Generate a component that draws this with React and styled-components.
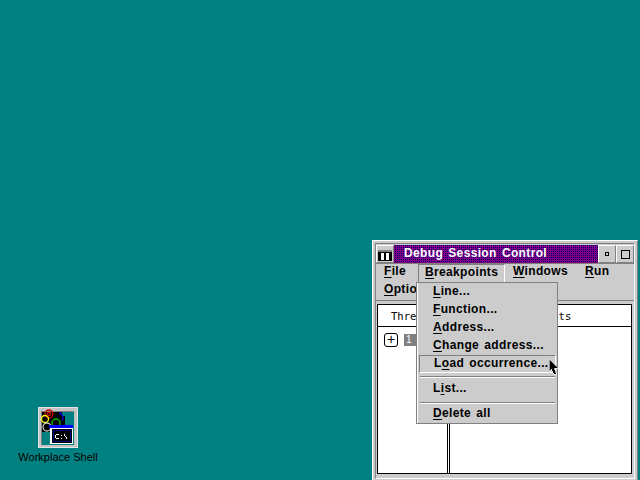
import React from 'react';
import styled, { createGlobalStyle } from 'styled-components';

const GlobalStyle = createGlobalStyle`
    html, body {
        margin: 0;
        padding: 0;
        background: #008080;
    }
`;

const Desktop = styled.div`
    position: relative;
    width: 640px;
    height: 480px;
    overflow: hidden;
    background: #008080;
    font-family: "Liberation Sans", Arial, sans-serif;
`;

const DesktopIcon = styled.div`
    position: absolute;
    left: 8px;
    top: 407px;
    width: 100px;
    display: flex;
    flex-direction: column;
    align-items: center;
    gap: 2px;
`;

const IconFrame = styled.div`
    width: 40px;
    height: 41px;
`;

const IconLabel = styled.div`
    font-size: 11px;
    line-height: 14px;
    color: #000;
    white-space: nowrap;
`;

const Win = styled.div`
    position: absolute;
    left: 372px;
    top: 240px;
    width: 266px;
    height: 242px;
    box-sizing: border-box;
    background: #cccccc;
    border-top: 1px solid #ffffff;
    border-left: 1px solid #ffffff;
    border-right: 1px solid #808080;
    border-bottom: 1px solid #808080;
    padding: 2px;
    display: flex;
`;

const WinInner = styled.div`
    flex: 1;
    min-width: 0;
    border-top: 1px solid #808080;
    border-left: 1px solid #808080;
    border-right: 1px solid #ffffff;
    border-bottom: 1px solid #ffffff;
    padding: 1px 0 4px 0;
    display: flex;
    flex-direction: column;
`;

const TitleRow = styled.div`
    display: flex;
    height: 18px;
    flex-shrink: 0;
`;

const SysButton = styled.div`
    width: 18px;
    height: 18px;
    box-sizing: border-box;
    background: #cccccc;
    border-top: 1px solid #fff;
    border-left: 1px solid #fff;
    border-right: 1px solid #808080;
    border-bottom: 1px solid #808080;
    display: flex;
    align-items: flex-end;
    justify-content: center;
    padding-bottom: 1px;
`;

const SysGlyph = styled.div`
    width: 14px;
    height: 11px;
    background: #000;
    border-top: 2px solid #808080;
    box-sizing: border-box;
    display: flex;
    justify-content: space-evenly;
`;

const SysPane = styled.div`
    width: 3px;
    height: 7px;
    margin-top: 1px;
    background: #fff;
`;

const TitleBar = styled.div`
    flex: 1;
    background-color: #800080;
    background-image: conic-gradient(#000080 0 90deg, #800080 0);
    background-size: 2px 2px;
    color: #fff;
    font-size: 12px;
    font-weight: 700;
    letter-spacing: 0.35px;
    word-spacing: 1.5px;
    line-height: 17px;
    padding-left: 10px;
    white-space: nowrap;
`;

const FrameButton = styled.div`
    width: 18px;
    height: 18px;
    box-sizing: border-box;
    background: #cccccc;
    border-top: 1px solid #fff;
    border-left: 1px solid #fff;
    border-right: 1px solid #808080;
    border-bottom: 1px solid #808080;
    display: flex;
    align-items: center;
    justify-content: center;
`;

const FrameGlyph = styled.div`
    width: ${(props) => props.size}px;
    height: ${(props) => props.size}px;
    box-sizing: border-box;
    border: 1px solid #000;
`;

const MenuBar = styled.div`
    display: grid;
    grid-template-columns: 42px 87px 72px 1fr;
    grid-auto-rows: 18px;
    height: 36px;
    flex-shrink: 0;
    border-top: 1px solid #808080;
    border-bottom: 1px solid #808080;
`;

const MenuItem = styled.div`
    font-size: 12px;
    font-weight: 700;
    letter-spacing: 0.35px;
    line-height: 15px;
    color: #000;
    padding-left: ${(props) => (props.active ? '6px' : '8px')};
    white-space: nowrap;
    box-sizing: border-box;
    ${(props) =>
        props.active &&
        `border-top: 1px solid #808080;
         border-left: 1px solid #808080;
         border-right: 1px solid #fff;`}

    u {
        text-underline-offset: 2px;
        text-decoration-thickness: 1px;
    }
`;

const Client = styled.div`
    flex: 1;
    margin: 3px 2px 0 1px;
    background: #fff;
    border: 1px solid #000;
    display: flex;
    flex-direction: column;
`;

const HeaderRow = styled.div`
    display: grid;
    grid-template-columns: 70px 1fr;
    height: 21px;
    border-bottom: 1px solid #000;
    flex-shrink: 0;
`;

const HeaderCell = styled.div`
    font-family: "DejaVu Sans Mono", "Liberation Mono", monospace;
    font-size: 10.5px;
    line-height: 22px;
    color: #000;
    white-space: nowrap;
    padding-left: ${(props) => props.pad}px;
`;

const Panes = styled.div`
    flex: 1;
    display: grid;
    grid-template-columns: 70px 1fr;
`;

const LeftPane = styled.div`
    border-right: 1px solid #000;
    padding: 6px 0 0 6px;
    display: flex;
    align-items: flex-start;
    gap: 6px;
`;

const PlusBox = styled.div`
    width: 14px;
    height: 14px;
    box-sizing: border-box;
    border: 1px solid #000;
    border-radius: 3px;
    font-size: 14px;
    line-height: 11px;
    text-align: center;
`;

const TreeLabel = styled.div`
    width: 20px;
    height: 12px;
    margin-top: 1px;
    background: #808080;
    color: #fff;
    font-size: 10px;
    line-height: 12px;
    padding-left: 2px;
    box-sizing: border-box;
`;

const RightPane = styled.div`
    border-left: 1px solid #000;
    margin-left: 1px;
`;

const Menu = styled.div`
    position: absolute;
    left: 416px;
    top: 282px;
    width: 142px;
    height: 142px;
    box-sizing: border-box;
    background: #cccccc;
    border: 1px solid #808080;
    box-shadow: inset 1px 0 0 #fff;
    padding: 0 1px 0 2px;
    display: flex;
    flex-direction: column;
`;

const Entry = styled.div`
    height: 18px;
    flex-shrink: 0;
    box-sizing: border-box;
    font-size: 12px;
    font-weight: 700;
    letter-spacing: 0.35px;
    word-spacing: 1.5px;
    line-height: ${(props) => (props.selected ? '15px' : '16px')};
    color: #000;
    padding-left: 14px;
    white-space: nowrap;
    ${(props) =>
        props.selected &&
        `border-top: 1px solid #808080;
         border-left: 1px solid #808080;
         border-right: 1px solid #fff;
         border-bottom: 1px solid #fff;`}

    u {
        text-underline-offset: 2px;
        text-decoration-thickness: 1px;
    }
`;

const Separator = styled.div`
    height: 1px;
    flex-shrink: 0;
    background: #808080;
    border-bottom: 1px solid #fff;
    margin: ${(props) => props.space};
`;

const Cursor = styled.svg`
    position: absolute;
    left: 548px;
    top: 358px;
`;

const WorkplaceIcon = () => (
    <svg width="40" height="41" viewBox="0 0 40 41" shapeRendering="crispEdges">
        <rect x="0" y="0" width="40" height="41" fill="#e4e4e4" />
        <rect x="1" y="1" width="38" height="39" fill="#c4c4c4" />
        <rect x="3" y="4" width="33" height="34" fill="#808080" />
        <rect x="4" y="5" width="32" height="33" fill="#008080" />
        <rect x="4" y="5" width="20" height="20" fill="#000" />
        <rect x="24" y="9" width="3" height="9" fill="#000" />
        <g fill="none" shapeRendering="auto" strokeWidth="1.3">
            <circle cx="11" cy="7" r="4" stroke="#d00000" />
            <circle cx="11" cy="7" r="1.5" stroke="#d00000" />
            <circle cx="7" cy="12" r="3.5" stroke="#ffff00" />
            <circle cx="9" cy="20" r="4" stroke="#c8c8c8" />
            <circle cx="18" cy="16" r="4" stroke="#00c000" />
            <path d="M21 6 A5 5 0 0 1 24 14" stroke="#0000e0" />
        </g>
        <rect x="11" y="18" width="24" height="3" fill="#0000ff" />
        <rect x="12" y="21" width="23" height="16" fill="#fff" />
        <rect x="14" y="22" width="20" height="14" fill="#000" />
        <rect x="15" y="23" width="18" height="12" fill="#000080" />
        <rect x="16" y="24" width="16" height="10" fill="#000" />
        <g fill="#fff">
            <rect x="18" y="27" width="3" height="1" />
            <rect x="17" y="28" width="1" height="3" />
            <rect x="18" y="31" width="3" height="1" />
            <rect x="23" y="28" width="1" height="1" />
            <rect x="23" y="31" width="1" height="1" />
            <rect x="26" y="27" width="1" height="2" />
            <rect x="27" y="29" width="1" height="1" />
            <rect x="28" y="30" width="1" height="2" />
        </g>
    </svg>
);

const App = () => {
    return (
        <Desktop>
            <GlobalStyle />
            <DesktopIcon>
                <IconFrame><WorkplaceIcon /></IconFrame>
                <IconLabel>Workplace Shell</IconLabel>
            </DesktopIcon>
            <Win>
                <WinInner>
                    <TitleRow>
                        <SysButton><SysGlyph><SysPane /><SysPane /></SysGlyph></SysButton>
                        <TitleBar>Debug Session Control</TitleBar>
                        <FrameButton><FrameGlyph size={4} /></FrameButton>
                        <FrameButton><FrameGlyph size={9} /></FrameButton>
                    </TitleRow>
                    <MenuBar>
                        <MenuItem><u>F</u>ile</MenuItem>
                        <MenuItem active><u>B</u>reakpoints</MenuItem>
                        <MenuItem><u>W</u>indows</MenuItem>
                        <MenuItem><u>R</u>un</MenuItem>
                        <MenuItem><u>O</u>ptions</MenuItem>
                    </MenuBar>
                    <Client>
                        <HeaderRow>
                            <HeaderCell pad={13}>Threads</HeaderCell>
                            <HeaderCell pad={60}>Components</HeaderCell>
                        </HeaderRow>
                        <Panes>
                            <LeftPane>
                                <PlusBox>+</PlusBox>
                                <TreeLabel>1</TreeLabel>
                            </LeftPane>
                            <RightPane />
                        </Panes>
                    </Client>
                </WinInner>
            </Win>
            <Menu>
                <Entry><u>L</u>ine...</Entry>
                <Entry><u>F</u>unction...</Entry>
                <Entry><u>A</u>ddress...</Entry>
                <Entry><u>C</u>hange address...</Entry>
                <Entry selected>L<u>o</u>ad occurrence...</Entry>
                <Separator space="3px 1px 2px" />
                <Entry>L<u>i</u>st...</Entry>
                <Separator space="4px 1px 1px" />
                <Entry><u>D</u>elete all</Entry>
            </Menu>
            <Cursor width="12" height="18" viewBox="0 0 12 18" shapeRendering="crispEdges">
                <path d="M1 1 V13 L3.5 10.5 L6 16 H8.5 L6.5 10 H10 Z" fill="#000" stroke="#fff" strokeWidth="0.6" />
            </Cursor>
        </Desktop>
    );
};

export default App;
